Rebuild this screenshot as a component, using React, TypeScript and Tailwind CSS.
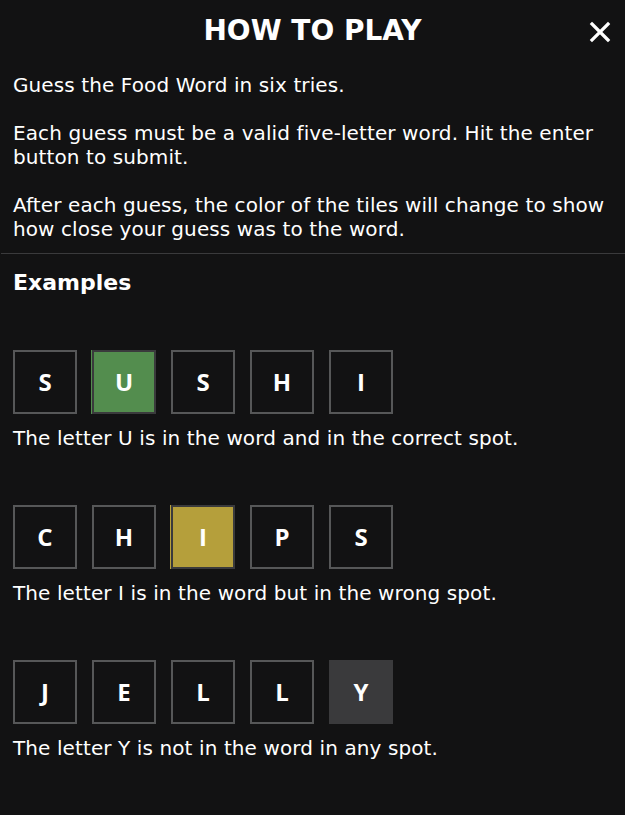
import React from "react";

type T = { l: string; s?: "g" | "y" | "x" };

const Tile = ({ t }: { t: T }) => {
  let cls = "border-2 border-[#565758] bg-[#121213]";
  if (t.s === "g") cls = "border-2 border-[#3a3a3c] bg-[#538d4e] shadow-[-1px_0_0_#538d4e]";
  if (t.s === "y") cls = "border-2 border-[#3a3a3c] bg-[#b59f3b] shadow-[-1px_0_0_#b59f3b]";
  if (t.s === "x") cls = "border-2 border-[#3a3a3c] bg-[#3a3a3c]";
  return (
    <div
      className={`w-[64px] h-[64px] flex items-center justify-center text-white font-bold text-[24px] ${cls}`}
      style={{ fontFamily: '"Open Sans", sans-serif' }}
    >
      {t.l}
    </div>
  );
};

const Example = ({ tiles, text, first }: { tiles: T[]; text: string; first?: boolean }) => (
  <div className={first ? "pt-[53px]" : "pt-[55px]"}>
    <div className="flex gap-[15px]">
      {tiles.map((t, i) => (
        <Tile key={i} t={t} />
      ))}
    </div>
    <p className="mt-[12px] text-[20px] leading-[24px] tracking-[0.1px]">{text}</p>
  </div>
);

export default function App() {
  return (
    <div
      className="w-[625px] h-[815px] bg-[#121213] text-white overflow-hidden"
      style={{ fontFamily: '"DejaVu Sans", sans-serif' }}
    >
      <div className="relative h-[62px] flex items-center justify-center">
        <h1 className="text-[28px] font-bold leading-none">HOW TO PLAY</h1>
        <svg
          className="absolute right-[14px] top-[21px]"
          width="22"
          height="22"
          viewBox="0 0 22 22"
          fill="none"
          stroke="white"
          strokeWidth="3.2"
          strokeLinecap="square"
        >
          <path d="M3 3 L19 19 M19 3 L3 19" />
        </svg>
      </div>
      <div className="px-[13px] pt-[11px] pb-[12px] text-[20px] leading-[24px] tracking-[0.1px] flex flex-col gap-[24px]">
        <p>Guess the Food Word in six tries.</p>
        <p>Each guess must be a valid five-letter word. Hit the enter button to submit.</p>
        <p>After each guess, the color of the tiles will change to show how close your guess was to the word.</p>
      </div>
      <div className="h-px bg-[#3a3a3c] ml-px" />
      <div className="px-[13px]">
        <h2 className="mt-[15px] text-[22px] font-bold leading-[28px]">Examples</h2>
        <Example
          first
          tiles={[{ l: "S" }, { l: "U", s: "g" }, { l: "S" }, { l: "H" }, { l: "I" }]}
          text="The letter U is in the word and in the correct spot."
        />
        <Example
          tiles={[{ l: "C" }, { l: "H" }, { l: "I", s: "y" }, { l: "P" }, { l: "S" }]}
          text="The letter I is in the word but in the wrong spot."
        />
        <Example
          tiles={[{ l: "J" }, { l: "E" }, { l: "L" }, { l: "L" }, { l: "Y", s: "x" }]}
          text="The letter Y is not in the word in any spot."
        />
      </div>
    </div>
  );
}
